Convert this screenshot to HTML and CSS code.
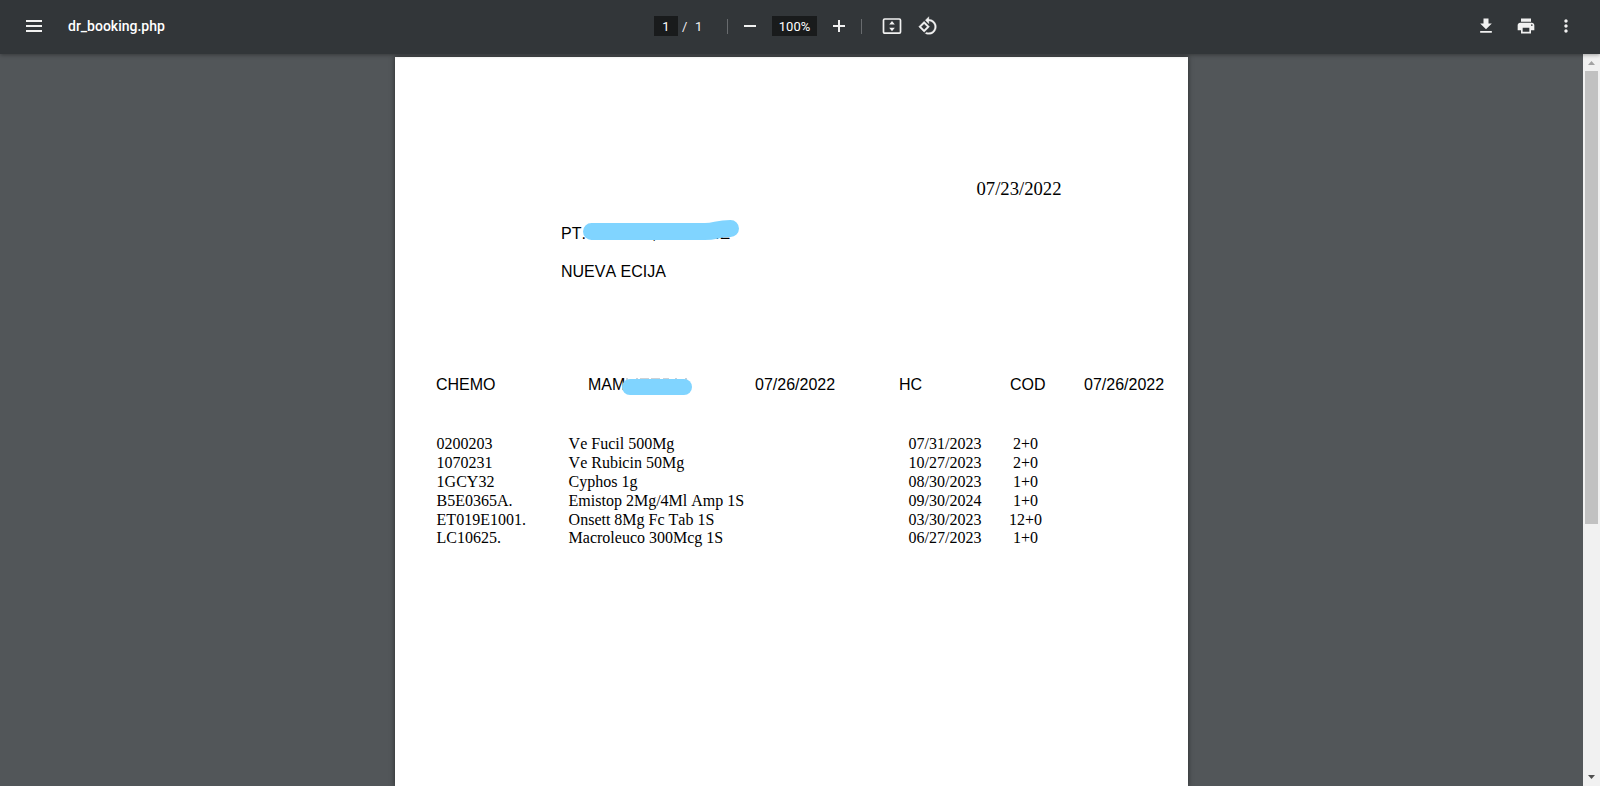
FILE: index.html
```html
<!DOCTYPE html>
<html lang="en">
<head>
<meta charset="utf-8">
<title>dr_booking.php</title>
<link rel="stylesheet" href="styles.css">
</head>
<body>
<header class="toolbar">
  <div class="start">
    <svg class="icon small" viewBox="0 0 20 20"><path d="M2 4h16v2H2zM2 9h16v2H2zM2 14h16v2H2z"/></svg>
    <span class="title">dr_booking.php</span>
  </div>
  <div class="center">
    <span class="field page-no">1</span><span class="slash">/</span><span class="total">1</span>
    <span class="sep sep-a"></span>
    <svg class="icon small" viewBox="0 0 20 20"><path d="M4 9h12v2H4z"/></svg>
    <span class="field zoom">100%</span>
    <svg class="icon small" viewBox="0 0 20 20"><path d="M4 9h5V4h2v5h5v2h-5v5H9v-5H4z"/></svg>
    <span class="sep sep-b"></span>
    <svg class="icon small fit" viewBox="0 0 20 20"><rect x="1.500" y="3" width="17" height="14.200" rx="1.200" fill="none" stroke="#f1f1f1" stroke-width="1.700"/><path d="M10 5l2.800 3.500H7.200zM10 15.300l2.800-3.500H7.200z"/></svg>
    <svg class="icon rotate" viewBox="0 0 24 24"><path stroke="#f1f1f1" stroke-width=".4" d="M7.340 6.410L.86 12.900l6.490 6.480 6.490-6.480-6.500-6.490zM3.690 12.900l3.660-3.660L11 12.900l-3.660 3.660-3.650-3.660zm15.670-6.260C17.610 4.880 15.300 4 13 4V.76L8.760 5 13 9.240V6c1.790 0 3.580.68 4.950 2.050 2.730 2.730 2.730 7.170 0 9.900C16.580 19.320 14.790 20 13 20c-.97 0-1.940-.21-2.840-.61l-1.490 1.490C10.020 21.620 11.510 22 13 22c2.300 0 4.610-.88 6.360-2.640 3.520-3.510 3.520-9.210 0-12.720z"/></svg>
  </div>
  <div class="end">
    <svg class="icon small" viewBox="0 0 24 24"><path d="M19 9h-4V3H9v6H5l7 7 7-7zM5 18v2h14v-2H5z"/></svg>
    <svg class="icon small" viewBox="0 0 24 24"><path d="M19 8H5c-1.660 0-3 1.340-3 3v6h4v4h12v-4h4v-6c0-1.660-1.340-3-3-3zm-3 11H8v-5h8v5zm3-7c-.55 0-1-.45-1-1s.45-1 1-1 1 .45 1 1-.45 1-1 1zm-1-9H6v4h12V3z"/></svg>
    <svg class="icon small" viewBox="0 0 24 24"><path d="M12 8c1.100 0 2-.9 2-2s-.9-2-2-2-2 .9-2 2 .9 2 2 2zm0 2c-1.100 0-2 .9-2 2s.9 2 2 2 2-.9 2-2-.9-2-2-2zm0 6c-1.100 0-2 .9-2 2s.9 2 2 2 2-.9 2-2-.9-2-2-2z"/></svg>
  </div>
</header>
<div class="viewer">
  <main class="sheet">
    <p class="date">07/23/2022</p>
    <p class="patient">PT.<span class="rest comma">,</span><span class="rest tail">.E</span>
      <svg class="mark mark-patient" viewBox="0 0 156 20"><path d="M8.500 11.500H122C133 11.500 134 8.500 147.500 8.500" fill="none" stroke="#80d4ff" stroke-width="17" stroke-linecap="round"/></svg>
    </p>
    <p class="place">NUEVA ECIJA</p>
    <div class="terms">
      <span>CHEMO</span><span class="contact">MAM<svg class="mark residue" viewBox="0 0 66 2"><path d="M1 1h2M11 1h2M15 1h9M26 1h9M38 1h6M50 1h2M60 1h2" stroke="#9aa5ac" stroke-width="1"/></svg><span class="mark mark-contact"></span></span><span>07/26/2022</span><span>HC</span><span>COD</span><span>07/26/2022</span>
    </div>
    <div class="items">
      <span>0200203</span><span>Ve Fucil 500Mg</span><span>07/31/2023</span><span class="qty">2+0</span>
      <span>1070231</span><span>Ve Rubicin 50Mg</span><span>10/27/2023</span><span class="qty">2+0</span>
      <span>1GCY32</span><span>Cyphos 1g</span><span>08/30/2023</span><span class="qty">1+0</span>
      <span>B5E0365A.</span><span>Emistop 2Mg/4Ml Amp 1S</span><span>09/30/2024</span><span class="qty">1+0</span>
      <span>ET019E1001.</span><span>Onsett 8Mg Fc Tab 1S</span><span>03/30/2023</span><span class="qty">12+0</span>
      <span>LC10625.</span><span>Macroleuco 300Mcg 1S</span><span>06/27/2023</span><span class="qty">1+0</span>
    </div>
  </main>
  <div class="scrollbar">
    <svg class="arrow" viewBox="0 0 17 17"><path d="M5 11h7L8.500 7z" fill="#a3a3a3"/></svg>
    <div class="thumb"></div>
    <svg class="arrow" viewBox="0 0 17 17"><path d="M5 6h7L8.500 10z" fill="#505050"/></svg>
  </div>
</div>
</body>
</html>
```
FILE: styles.css
```css
* { box-sizing: border-box; }
body {
  margin: 0;
  height: 786px;
  overflow: hidden;
  display: flex;
  flex-direction: column;
  background: #525659;
  font-family: Roboto, sans-serif;
}
p { margin: 0; }

.toolbar {
  position: relative;
  z-index: 2;
  flex: none;
  height: 54px;
  display: grid;
  grid-template-columns: 654px 1fr auto;
  align-items: center;
  padding-bottom: 2px;
  background: #323639;
  color: #f1f1f1;
  font-size: 13px;
  box-shadow: 0 1px 4px rgba(0, 0, 0, .35);
}
.start, .center, .end { display: flex; align-items: center; }
.icon { fill: #f1f1f1; flex: none; display: block; }
.start { padding-left: 24px; }
.title { margin-left: 24px; font-size: 14px; font-weight: 500; color: #fff; }
.small { width: 20px; height: 20px; }
.field { height: 20px; background: #191b1c; color: #fff; text-align: center; line-height: 21px; }
.page-no { width: 24px; }
.slash { margin-left: 4px; width: 13px; }
.total { width: 8px; }
.sep { width: 1px; height: 15px; background: #686b6e; }
.sep-a { margin: 0 12px 0 24px; }
.zoom { width: 45px; margin: 0 12px; }
.sep-b { margin: 0 20px 0 12px; }
.rotate { width: 20px; height: 20px; margin-left: 16px; }
.end { gap: 20px; padding-right: 24px; }

.viewer { flex: 1; min-height: 0; display: flex; justify-content: space-between; }
.sheet {
  width: 793px;
  margin: 3px 0 0 395px;
  padding-left: 41px;
  background: #fff;
  color: #000;
  box-shadow: 0 0 5px rgba(0, 0, 0, .5);
  font: 16px/18px "Liberation Sans", Arial, sans-serif;
  font-kerning: none;
}
.date { padding: 121px 0 0 540.5px; font: 18.67px/22px "Liberation Serif", "Times New Roman", serif; }
.patient, .place { padding-left: 125px; }
.patient { position: relative; margin-top: 25px; }
.rest { position: absolute; top: 0; }
.comma { left: 216px; }
.tail { left: 279px; }
.mark { position: absolute; }
.mark-patient { left: 147px; top: -5px; width: 156px; height: 20px; }
.place { margin-top: 20px; }
.terms {
  display: grid;
  grid-template-columns: 152px 167px 144px 111px 74px auto;
  margin-top: 95px;
}
.contact { position: relative; }
.mark-contact { left: 34px; top: 3px; width: 70px; height: 16px; border-radius: 8px; background: #80d4ff; }
.residue { left: 37px; top: 2px; width: 66px; height: 2px; }
.items {
  display: grid;
  grid-template-columns: 132px 340px 86px 62px;
  grid-auto-rows: 18.9px;
  margin-top: 40px;
  padding-left: .6px;
  font: 16px/19px "Liberation Serif", "Times New Roman", serif;
  font-kerning: none;
}
.date { font-kerning: none; }
.qty { text-align: center; }

.scrollbar { width: 17px; display: flex; flex-direction: column; background: #f1f1f1; }
.arrow { width: 17px; height: 17px; display: block; }
.thumb { width: 13px; height: 453px; margin: 0 2px auto; background: #c1c1c1; }
```
